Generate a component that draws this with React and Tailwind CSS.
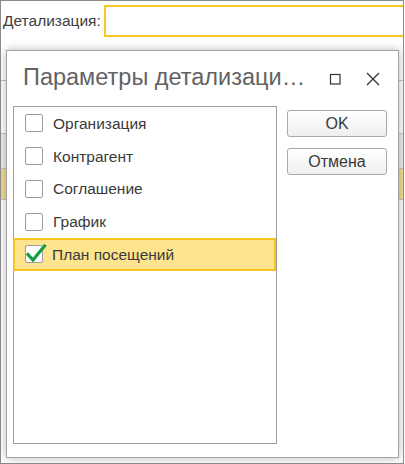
const items = [
  { label: "Организация", checked: false },
  { label: "Контрагент", checked: false },
  { label: "Соглашение", checked: false },
  { label: "График", checked: false },
  { label: "План посещений", checked: true, selected: true },
];

function CheckBox({ checked }) {
  return (
    <span className="relative block h-[18px] w-[18px] shrink-0 rounded-[2px] border border-[#9c9c9c] bg-white">
      {checked && (
        <svg
          className="absolute -left-[1px] -top-[4px] overflow-visible"
          width="22"
          height="22"
          viewBox="0 0 22 22"
        >
          <path
            d="M3 12.5 L8 18 L19.5 4"
            fill="none"
            stroke="#1a9c45"
            strokeWidth="3.2"
            strokeLinecap="square"
          />
        </svg>
      )}
    </span>
  );
}

function Button({ children }) {
  return (
    <button className="flex h-[27px] w-[100px] items-center justify-center rounded-[3px] border border-[#a9a9a9] bg-gradient-to-b from-white to-[#efefef] text-[16px] text-[#3a3a3a]">
      {children}
    </button>
  );
}

export default function App() {
  return (
    <div className="relative h-[464px] w-[404px] overflow-hidden border border-[#8a8a8a] bg-white font-['Liberation_Sans',Arial,sans-serif] text-[#333]">
      {/* form header */}
      <div className="flex h-[39px] items-center pt-[1px]">
        <span className="pl-[2px] text-[15.5px] text-[#404040]">Детализация:</span>
        <div className="-mr-[4px] ml-[3px] h-[32px] flex-1 border-2 border-[#f6c622] bg-white" />
      </div>

      {/* background table */}
      <div className="h-[40px]" />
      <div className="h-[53px] border-t border-[#c6c6c6]" />
      <div className="h-[35px] border-t border-[#c6c6c6] bg-[#ececec]" />
      <div className="h-[32px] border-y border-[#c6c6c6] bg-[#f3dc90]" />

      {/* dialog */}
      <div className="absolute left-[5px] top-[49px] flex h-[408px] w-[393px] flex-col border border-[#a3a3a3] bg-white shadow-[0_0_9px_rgba(0,0,0,0.28)]">
        <div className="flex h-[55px] items-center pl-[16px] pr-[18px]">
          <span className="flex-1 truncate pb-[1px] text-[23.5px] text-[#636363]">
            Параметры детализаци…
          </span>
          <svg width="12" height="12" viewBox="0 0 12 12" className="mr-[25px] shrink-0">
            <rect x="1.5" y="1.5" width="9.5" height="9.5" fill="none" stroke="#333" strokeWidth="1.2" />
          </svg>
          <svg width="14" height="14" viewBox="0 0 14 14" className="shrink-0">
            <path d="M1 1 L13 13 M13 1 L1 13" stroke="#333" strokeWidth="1.3" />
          </svg>
        </div>

        <div className="flex flex-1 gap-[10px] pl-[6px] pb-[12px]">
          <div className="h-[338px] w-[264px] border border-[#9e9e9e]">
            {items.map((it) => (
              <div
                key={it.label}
                className={
                  it.selected
                    ? "-ml-px flex h-[32.75px] w-[263px] items-center gap-[9px] border-2 border-[#f5c524] bg-[#fde48d] pl-[10px]"
                    : "flex h-[32.75px] items-center gap-[10px] pl-[11px]"
                }
              >
                <CheckBox checked={it.checked} />
                <span className="text-[15.5px] text-[#3a3a3a]">{it.label}</span>
              </div>
            ))}
          </div>
          <div className="flex flex-col gap-[11px] pt-[4px]">
            <Button>OK</Button>
            <Button>Отмена</Button>
          </div>
        </div>
      </div>
    </div>
  );
}
